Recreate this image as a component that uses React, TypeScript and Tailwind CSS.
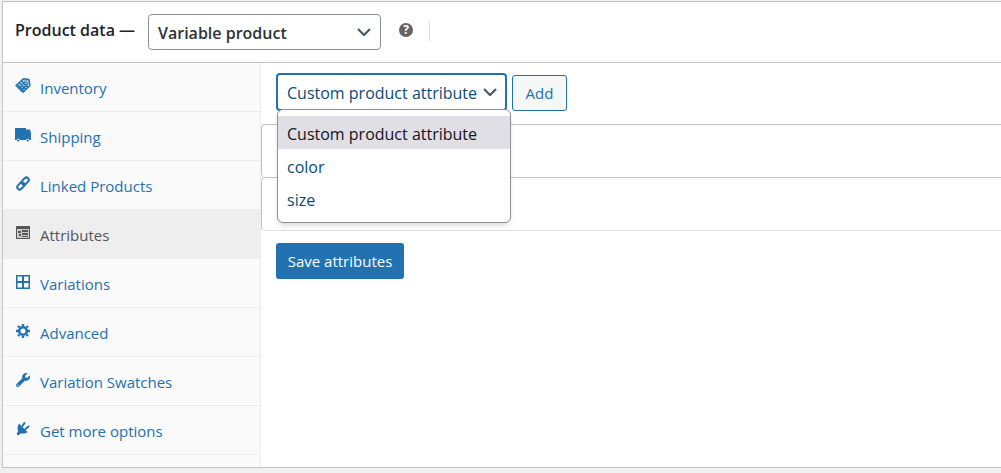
import { useState } from "react";
import type { ReactNode } from "react";
import clsx from "clsx";
import { FaWrench } from "react-icons/fa";

function TagIcon() {
  return (
    <svg viewBox="0 0 16 16" className="w-4 h-4" fill="none" stroke="currentColor" aria-hidden="true">
      <path d="M1 7.500 8.500.800 14 1.500 15 7.500 8 14.200Z" fill="#a9cbe6" strokeWidth="1.400" strokeLinejoin="round" />
      <path d="m2.500 6.500 7 7M4.500 4.800l6.500 6.500M6.500 3l6.500 6.500M3.500 10.500l7-7M5.500 12.500l7.500-7" strokeWidth="1.200" />
      <circle cx="12.200" cy="3.300" r="1.300" fill="#fff" strokeWidth=".8" />
    </svg>
  );
}

function TruckIcon() {
  return (
    <svg viewBox="0 0 16 14" className="w-4 h-[14px]" fill="currentColor" aria-hidden="true">
      <path d="M0 0h11v1.500h4L16 5v7h-1.500a1.800 1.800 0 0 0-3.400 0H5a1.800 1.800 0 0 0-3.400 0H0Z" />
      <circle cx="3.300" cy="12.600" r="1.100" />
      <circle cx="12.800" cy="12.600" r="1.100" />
    </svg>
  );
}

function LinkIcon() {
  return (
    <svg viewBox="0 0 16 16" className="w-4 h-4" fill="none" stroke="currentColor" strokeWidth="2" aria-hidden="true">
      <rect x="6.200" y="2.700" width="8" height="4.800" rx="2.400" transform="rotate(-45 10.200 5.100)" />
      <rect x="1.800" y="7.500" width="8" height="4.800" rx="2.400" transform="rotate(-45 5.800 9.900)" />
    </svg>
  );
}

function FormIcon() {
  return (
    <svg viewBox="0 0 16 16" className="w-4 h-4" fill="currentColor" aria-hidden="true">
      <path
        fillRule="evenodd"
        d="M1.500 1h13a.5.5 0 0 1 .5.5v12a.5.5 0 0 1-.5.5h-13a.5.5 0 0 1-.5-.5v-12a.5.5 0 0 1 .5-.5ZM2 4v9h12V4Z"
      />
      <path d="M2 4h12v9H2z" fill="#ccc" />
      <path d="M3 6h3v2H3zM7 5h6v2H7zM7 8h6v2H7zM4 9h2v2H4zM7 11h6v1H7z" />
    </svg>
  );
}

function GridIcon() {
  return (
    <svg viewBox="0 0 16 16" className="w-4 h-4" fill="currentColor" aria-hidden="true">
      <path fillRule="evenodd" d="M1 1h14v14H1ZM2.500 2.500V7H7V2.500ZM9 2.500V7h4.500V2.500ZM2.500 9v4.500H7V9ZM9 9v4.500h4.500V9Z" />
    </svg>
  );
}

function GearIcon() {
  return (
    <svg viewBox="0 0 16 16" className="w-4 h-4" fill="none" stroke="currentColor" aria-hidden="true">
      <circle cx="8" cy="8" r="3.800" strokeWidth="2.600" />
      <path
        d="M8 3V1M8 15v-2M3 8H1M15 8h-2M4.500 4.500 3 3M13 13l-1.500-1.500M4.500 11.500 3 13M13 3l-1.500 1.500"
        strokeWidth="2.400"
      />
    </svg>
  );
}

function PlugIcon() {
  return (
    <svg viewBox="0 0 16 16" className="w-4 h-4" fill="currentColor" aria-hidden="true">
      <path d="M4 2.500 12.500 11c-1.800 1.500-4.600 1.900-7 1.400L4 14H2v-2l1-1.500c-.8-2.500-.500-5.500 1-8Z" />
      <path d="m7.500 5 2-3M10.500 8l3-2.500" stroke="currentColor" strokeWidth="2" strokeLinecap="round" />
    </svg>
  );
}

function ChevronIcon({ className }: { className: string }) {
  return (
    <svg
      viewBox="0 0 14 8"
      className={clsx("absolute w-[14px] h-2 pointer-events-none text-[#50575e]", className)}
      fill="none"
      stroke="currentColor"
      strokeWidth="2.2"
      aria-hidden="true"
    >
      <path d="m1 1 6 6 6-6" />
    </svg>
  );
}

const TABS: { label: string; icon: ReactNode }[] = [
  { label: "Inventory", icon: <TagIcon /> },
  { label: "Shipping", icon: <TruckIcon /> },
  { label: "Linked Products", icon: <LinkIcon /> },
  { label: "Attributes", icon: <FormIcon /> },
  { label: "Variations", icon: <GridIcon /> },
  { label: "Advanced", icon: <GearIcon /> },
  { label: "Variation Swatches", icon: <FaWrench className="w-[14px] h-[14px]" /> },
  { label: "Get more options", icon: <PlugIcon /> },
];

const ATTRIBUTES = ["Custom product attribute", "color", "size"];

function Header() {
  return (
    <header className="flex items-start border-b border-[#c3c4c7] pl-3 pt-3 pb-3">
      <label htmlFor="product-type" className="w-[133px] shrink-0 pt-1 text-base leading-6 font-semibold text-[#1d2327] whitespace-nowrap">
        Product data —
      </label>
      <div className="relative">
        <select
          id="product-type"
          className="appearance-none block w-[233px] h-9 pt-px pl-[9px] pr-8 border border-[#8c8f94] rounded bg-white text-base font-semibold text-[#2c3338]"
        >
          <option>Variable product</option>
          <option>Simple product</option>
        </select>
        <ChevronIcon className="right-[10px] top-[14px]" />
      </div>
      <button
        type="button"
        aria-label="Help"
        className="ml-[18px] mt-[9px] w-[14px] h-[14px] rounded-full bg-[#646464] text-white text-xs leading-[14px] font-bold text-center"
      >
        ?
      </button>
      <span className="ml-[16px] mt-[7px] w-px h-5 bg-[#dcdcde]" />
    </header>
  );
}

function Tabs({ active, onSelect }: { active: string; onSelect: (label: string) => void }) {
  return (
    <nav className="w-[258px] shrink-0 border-r border-[#eee] bg-[#fafafa] pb-3">
      <ul>
        {TABS.map(({ label, icon }) => (
          <li key={label}>
            <a
              href="#"
              onClick={(e) => {
                e.preventDefault();
                onSelect(label);
              }}
              className={clsx(
                "flex h-[49px] gap-[9px] pl-3 border-b border-[#eee] text-[15px] leading-6",
                label === active ? "bg-[#eee] text-[#555]" : "text-[#2271b1]"
              )}
            >
              <span className="flex w-4 h-4 mt-[15px] items-center justify-center">{icon}</span>
              <span className="pt-[13px]">{label}</span>
            </a>
          </li>
        ))}
      </ul>
    </nav>
  );
}

function AttributePicker() {
  const [value, setValue] = useState(ATTRIBUTES[0]);
  const [open, setOpen] = useState(true);

  return (
    <div className="relative w-[231px]">
      <select
        aria-label="Custom product attribute"
        value={value}
        onChange={(e) => setValue(e.target.value)}
        onMouseDown={(e) => {
          e.preventDefault();
          setOpen(!open);
        }}
        className="appearance-none block w-full h-[38px] pt-px pl-[9px] border-2 border-[#2271b1] rounded bg-white text-base text-[#0a4b78] outline-none"
      >
        {ATTRIBUTES.map((name) => (
          <option key={name}>{name}</option>
        ))}
      </select>
      <ChevronIcon className="right-[10px] top-[15px]" />
      {open && (
        <ul
          role="listbox"
          className="absolute left-px top-9 z-10 w-[234px] pt-[6px] pb-[7px] border border-[#8f8f9d] rounded-md bg-white shadow-md"
        >
          {ATTRIBUTES.map((name) => (
            <li
              key={name}
              role="option"
              aria-selected={name === value}
              onClick={() => {
                setValue(name);
                setOpen(false);
              }}
              className={clsx(
                "h-[33px] px-[9px] text-base leading-9 cursor-default whitespace-nowrap",
                name === value ? "bg-[#e0dfe6] text-[#15141a]" : "text-[#0a4b78]"
              )}
            >
              {name}
            </li>
          ))}
        </ul>
      )}
    </div>
  );
}

export default function App() {
  const [tab, setTab] = useState("Attributes");

  return (
    <div className="bg-[#f0f0f1] pt-px pl-[2px] pb-[5px] overflow-hidden font-['Open_Sans','Noto_Sans',sans-serif]">
      <section className="border border-r-0 border-[#c3c4c7] bg-white">
        <Header />
        <div className="flex">
          <Tabs active={tab} onSelect={setTab} />
          <main className="flex-1 min-w-0">
            <div className="flex gap-[5px] pl-[15px] pt-[10px] pb-[13px]">
              <AttributePicker />
              <button
                type="button"
                className="mt-[2px] h-9 w-[55px] border border-[#2271b1] rounded-[3px] bg-[#f6f7f7] text-[15px] text-[#2271b1]"
              >
                Add
              </button>
            </div>
            <div className="h-[53px] border-t border-l border-[#c3c4c7] rounded-l" />
            <div className="h-[54px] border border-r-0 border-[#c3c4c7] border-b-[#e2e2e4] rounded-l" />
            <button
              type="button"
              className="ml-[15px] mt-3 h-9 w-32 rounded-[3px] bg-[#2271b1] text-[15px] text-white"
            >
              Save attributes
            </button>
          </main>
        </div>
      </section>
    </div>
  );
}
